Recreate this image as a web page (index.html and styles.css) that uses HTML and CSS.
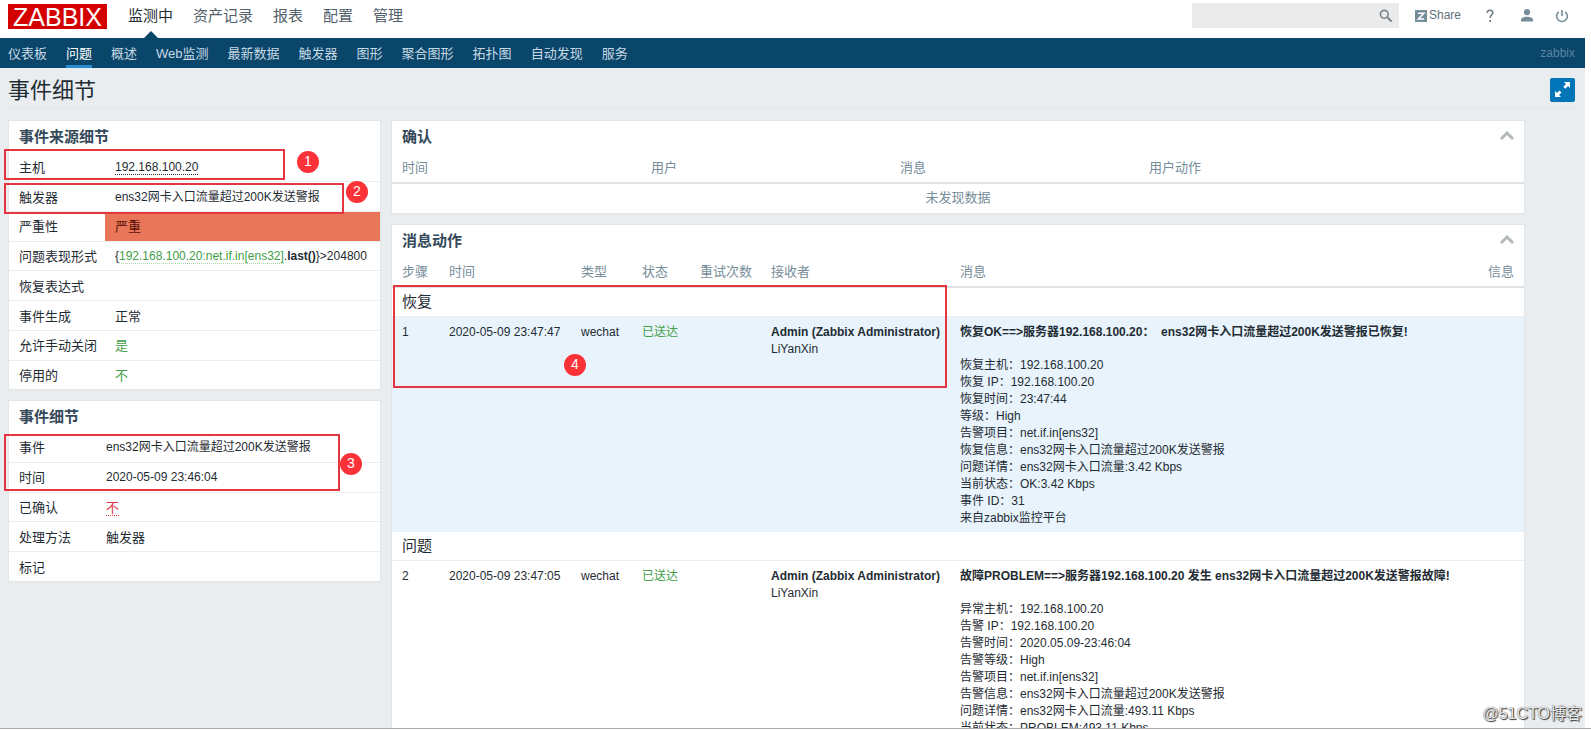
FILE: index.html
```html
<!DOCTYPE html>
<html lang="zh-CN">
<head>
<meta charset="utf-8">
<title>事件细节</title>
<link rel="stylesheet" href="styles.css">
</head>
<body>
<div class="window">
<div class="page">
  <header class="top">
    <a class="logo" href="#">ZABBIX</a>
    <nav class="menu">
      <a class="active" href="#">监测中</a>
      <a href="#">资产记录</a>
      <a href="#">报表</a>
      <a href="#">配置</a>
      <a href="#">管理</a>
    </nav>
    <form class="search">
      <input type="text" aria-label="搜索">
      <button type="button" aria-label="搜索">
        <svg width="14" height="14" viewBox="0 0 14 14" fill="none" stroke="#77838b"><circle cx="5.3" cy="5.3" r="3.9" stroke-width="1.6"/><path d="M8.3 8.3L12.6 12.6" stroke-width="2"/></svg>
      </button>
    </form>
    <a class="share" href="#"><svg width="12" height="12" viewBox="0 0 12 12"><rect width="12" height="12" fill="#768d99"/><path d="M3 3.2H8.8L3.4 9H9.2" fill="none" stroke="#fff" stroke-width="1.6"/></svg>Share</a>
    <a class="icon help" href="#" aria-label="帮助"><svg width="8" height="14" viewBox="0 0 8 14" fill="none" stroke="#6f7f89"><path d="M1.2 4C1.2 2 2.4 1.2 4 1.2S6.8 2.2 6.8 3.8C6.8 6 4.1 6 4.1 9" stroke-width="1.6"/><path d="M4.1 11V13" stroke-width="1.8"/></svg></a>
    <a class="icon user" href="#" aria-label="用户"><svg width="14" height="13" viewBox="0 0 14 13" fill="#768d99"><circle cx="7" cy="3.2" r="3.1"/><path d="M1 12.5V11C1 8.8 4 7.8 7 7.8S13 8.8 13 11V12.5Z"/></svg></a>
    <a class="icon power" href="#" aria-label="退出"><svg width="14" height="14" viewBox="0 0 14 14" fill="none" stroke="#768d99" stroke-width="1.6"><path d="M3.8 2.8A5.4 5.4 0 1 0 10.2 2.8M7 1V7"/></svg></a>
  </header>
  <nav class="subnav">
    <a href="#">仪表板</a>
    <a class="active" href="#">问题</a>
    <a href="#">概述</a>
    <a href="#">Web监测</a>
    <a href="#">最新数据</a>
    <a href="#">触发器</a>
    <a href="#">图形</a>
    <a href="#">聚合图形</a>
    <a href="#">拓扑图</a>
    <a href="#">自动发现</a>
    <a href="#">服务</a>
    <span class="server">zabbix</span>
  </nav>
  <div class="title-row">
    <h1>事件细节</h1>
    <button class="expand" type="button" aria-label="全屏"><svg width="17" height="17" viewBox="0 0 17 17" fill="#fff"><path d="M10 1H16V7L14 5L11.3 7.7L9.3 5.7L12 3Z"/><path d="M7 16H1V10L3 12L5.5 9.5L7.5 11.5L5 14Z"/></svg></button>
  </div>
  <main class="columns">
    <div class="left">
      <section class="panel">
        <h2>事件来源细节</h2>
        <table class="facts source">
          <tr><th scope="row">主机</th><td><a class="plain" href="#">192.168.100.20</a></td></tr>
          <tr><th scope="row">触发器</th><td>ens32网卡入口流量超过200K发送警报</td></tr>
          <tr><th scope="row">严重性</th><td class="high">严重</td></tr>
          <tr><th scope="row">问题表现形式</th><td>{<a class="item" href="#">192.168.100.20:net.if.in[ens32]</a>.<b>last()</b>}&gt;204800</td></tr>
          <tr><th scope="row">恢复表达式</th><td></td></tr>
          <tr><th scope="row">事件生成</th><td class="cjk">正常</td></tr>
          <tr><th scope="row">允许手动关闭</th><td class="cjk green">是</td></tr>
          <tr><th scope="row">停用的</th><td class="cjk green">不</td></tr>
        </table>
      </section>
      <section class="panel">
        <h2>事件细节</h2>
        <table class="facts event">
          <tr><th scope="row">事件</th><td>ens32网卡入口流量超过200K发送警报</td></tr>
          <tr><th scope="row">时间</th><td>2020-05-09 23:46:04</td></tr>
          <tr><th scope="row">已确认</th><td class="cjk"><a class="red" href="#">不</a></td></tr>
          <tr><th scope="row">处理方法</th><td class="cjk">触发器</td></tr>
          <tr><th scope="row">标记</th><td></td></tr>
        </table>
      </section>
    </div>
    <div class="right">
      <section class="panel">
        <div class="head"><h2>确认</h2><button class="fold" type="button" aria-label="收起"><svg width="14" height="9" viewBox="0 0 14 9" fill="none" stroke="#b4b9bc" stroke-width="3"><path d="M1 8L7 2L13 8"/></svg></button></div>
        <table class="list acks">
          <colgroup><col class="quarter"><col class="quarter"><col class="quarter"><col></colgroup>
          <thead><tr><th>时间</th><th>用户</th><th>消息</th><th>用户动作</th></tr></thead>
          <tbody><tr><td class="empty" colspan="4">未发现数据</td></tr></tbody>
        </table>
      </section>
      <section class="panel">
        <div class="head"><h2>消息动作</h2><button class="fold" type="button" aria-label="收起"><svg width="14" height="9" viewBox="0 0 14 9" fill="none" stroke="#b4b9bc" stroke-width="3"><path d="M1 8L7 2L13 8"/></svg></button></div>
        <table class="list actions">
          <colgroup><col class="c-step"><col class="c-time"><col class="c-type"><col class="c-status"><col class="c-retry"><col class="c-user"><col><col class="c-info"></colgroup>
          <thead><tr><th>步骤</th><th>时间</th><th>类型</th><th>状态</th><th>重试次数</th><th>接收者</th><th>消息</th><th>信息</th></tr></thead>
          <tbody>
            <tr class="group"><td colspan="8">恢复</td></tr>
            <tr class="entry recovery">
              <td>1</td><td>2020-05-09 23:47:47</td><td>wechat</td><td class="green">已送达</td><td></td>
              <td><b>Admin (Zabbix Administrator)</b><br>LiYanXin</td>
              <td>
                <p class="subject">恢复OK==&gt;服务器192.168.100.20： &nbsp;ens32网卡入口流量超过200K发送警报已恢复!</p>
                <p>恢复主机：192.168.100.20<br>恢复 IP：192.168.100.20<br>恢复时间：23:47:44<br>等级：High<br>告警项目：net.if.in[ens32]<br>恢复信息：ens32网卡入口流量超过200K发送警报<br>问题详情：ens32网卡入口流量:3.42 Kbps<br>当前状态：OK:3.42 Kbps<br>事件 ID：31<br>来自zabbix监控平台</p>
              </td>
              <td></td>
            </tr>
            <tr class="group"><td colspan="8">问题</td></tr>
            <tr class="entry">
              <td>2</td><td>2020-05-09 23:47:05</td><td>wechat</td><td class="green">已送达</td><td></td>
              <td><b>Admin (Zabbix Administrator)</b><br>LiYanXin</td>
              <td>
                <p class="subject">故障PROBLEM==&gt;服务器192.168.100.20 发生 ens32网卡入口流量超过200K发送警报故障!</p>
                <p>异常主机：192.168.100.20<br>告警 IP：192.168.100.20<br>告警时间：2020.05.09-23:46:04<br>告警等级：High<br>告警项目：net.if.in[ens32]<br>告警信息：ens32网卡入口流量超过200K发送警报<br>问题详情：ens32网卡入口流量:493.11 Kbps<br>当前状态：PROBLEM:493.11 Kbps</p>
              </td>
              <td></td>
            </tr>
          </tbody>
        </table>
      </section>
    </div>
  </main>
</div>
<div class="mark mark-1"></div><div class="dot dot-1">1</div>
<div class="mark mark-2"></div><div class="dot dot-2">2</div>
<div class="mark mark-3"></div><div class="dot dot-3">3</div>
<div class="mark mark-4"></div><div class="dot dot-4">4</div>
<div class="watermark">@51CTO博客</div>
</div>
</body>
</html>
```

FILE: styles.css
```css
* { box-sizing: border-box; }
body {
  margin: 0;
  background: #fff;
  color: #1f2c33;
  font: 12px/17px "Liberation Sans", Arial, "Noto Sans CJK SC", sans-serif;
}
a { color: inherit; text-decoration: none; }
button { border: 0; padding: 0; background: none; cursor: pointer; display: flex; align-items: center; justify-content: center; }
h1, h2, p { margin: 0; }
table { border-collapse: collapse; border-spacing: 0; width: 100%; }

.window { position: relative; height: calc(100vh - 2px); overflow: hidden; border-bottom: 1px solid #a9acae; }
.page { margin-right: 6px; min-height: 100%; background: #e9edf0; }

.top { display: flex; align-items: center; height: 38px; padding: 0 16px 7px 8px; background: #fff; }
.logo { margin-top: 1px; width: 99px; height: 25px; background: #d40000; color: #fff; font-size: 25px; line-height: 26px; text-align: center; }
.menu { display: flex; gap: 20px; margin: 0 auto 0 21px; font-size: 15px; line-height: 31px; color: #50606a; }
.menu .active { position: relative; color: #1f2c33; }
.menu .active::after { content: ""; position: absolute; left: 50%; top: 100%; margin-left: -7px; border: 7px solid transparent; border-top: 0; border-bottom-color: #0a466a; }
.search { display: flex; width: 207px; height: 25px; margin-right: 16px; background: #ebebeb; }
.search input { flex: 1; min-width: 0; border: 0; background: none; }
.search button { width: 26px; }
.share { display: flex; align-items: center; gap: 2px; margin-right: 25px; color: #61717b; }
.icon { display: flex; }
.help { margin-right: 26px; }
.user { margin-right: 21px; }

.subnav { display: flex; gap: 19px; height: 30px; padding: 0 10px 0 8px; background: #0a466a; color: #c6d9e5; font-size: 13px; line-height: 31px; }
.subnav .active { height: 30px; color: #fff; border-bottom: 3px solid #2b8bce; }
.server { margin-left: auto; color: #5b87a0; font-size: 12px; }

.title-row { display: flex; align-items: center; justify-content: space-between; height: 41px; margin: 0 10px 12px 8px; padding-top: 3px; border-bottom: 1px solid #e1e6e9; }
h1 { padding-top: 2px; font-size: 22px; line-height: 36px; font-weight: 400; }
.expand { width: 25px; height: 24px; background: #0275b8; border-radius: 2px; }

.columns { display: flex; align-items: flex-start; gap: 12px; padding: 0 61px 0 9px; }
.left { flex: 0 0 371px; display: flex; flex-direction: column; gap: 12px; }
.right { flex: 1; min-width: 0; display: flex; flex-direction: column; gap: 12px; }
.panel { background: #fff; box-shadow: 0 0 0 1px #e1e6e9; }
h2 { padding: 0 10px; font-size: 15px; line-height: 32px; color: #34495a; }
.head { display: flex; align-items: center; justify-content: space-between; padding-right: 10px; }
.fold { padding-bottom: 4px; }

.facts th, .facts td { padding: 1px 10px 0; text-align: left; font-weight: 400; white-space: nowrap; border-bottom: 1px solid #ebeef0; }
.facts th { font-size: 13px; }
.facts tr:last-child > * { border-bottom: 0; }
.source { height: 236px; }
.source th { width: 96px; padding-right: 0; }
.event { height: 148px; }
.event th { width: 87px; }
.cjk, .list th { font-size: 13px; }
.facts .high { background: #e97659; color: #5a1008; font-size: 13px; }
.plain { border-bottom: 1px dotted #1f2c33; }
.item { color: #429e47; border-bottom: 1px dotted #a9d3ab; }
.green { color: #429e47; }
.red { color: #dc3545; border-bottom: 1px dotted #dc3545; }

.list { table-layout: fixed; }
.list th { height: 30px; padding: 0 0 0 10px; text-align: left; font-weight: 400; color: #768d99; border-bottom: 2px solid #dce2e5; white-space: nowrap; }
.quarter { width: 22%; }
.list .empty { height: 30px; padding: 0 10px 3px; text-align: center; font-size: 13px; color: #768d99; }
.c-step { width: 47px; }
.c-time { width: 132px; }
.c-type { width: 61px; }
.c-status { width: 58px; }
.c-retry { width: 71px; }
.c-user { width: 189px; }
.c-info { width: 46px; }
.group td { height: 29px; padding: 0 10px; font-size: 15px; border-bottom: 1px solid #ebeef0; }
.entry td { padding: 7px 0 5px 10px; vertical-align: top; white-space: nowrap; }
.recovery { background: #e8f3fc; }
.subject { margin-bottom: 16px; font-weight: 700; }

.mark { position: absolute; border: 2px solid #e5353f; }
.mark-1 { left: 4px; top: 149px; width: 281px; height: 31px; }
.mark-2 { left: 4px; top: 183px; width: 340px; height: 31px; }
.mark-3 { left: 4px; top: 434px; width: 336px; height: 57px; }
.mark-4 { left: 393px; top: 285px; width: 554px; height: 103px; }
.dot { position: absolute; width: 22px; height: 22px; border-radius: 50%; background: #fb3238; color: #fff; font-size: 14px; line-height: 21px; text-align: center; }
.dot-1 { left: 297px; top: 151px; }
.dot-2 { left: 346px; top: 181px; }
.dot-3 { left: 340px; top: 453px; }
.dot-4 { left: 564px; top: 354px; }
.watermark { position: absolute; right: 9px; bottom: 4px; font-size: 16px; line-height: 20px; color: #e8eaeb; text-shadow: 1px 1px 1px #333, 0 0 1px #444; }
```
